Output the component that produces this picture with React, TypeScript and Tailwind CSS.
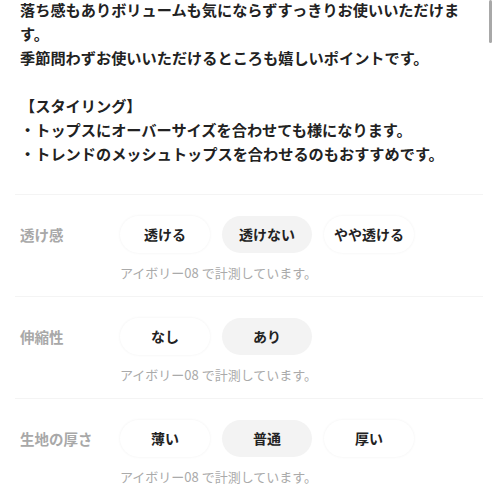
const font = { fontFamily: '"Noto Sans CJK JP", "Noto Sans", sans-serif' };

type Spec = {
  label: string;
  options: string[];
  selected: number;
};

const specs: Spec[] = [
  { label: "透け感", options: ["透ける", "透けない", "やや透ける"], selected: 1 },
  { label: "伸縮性", options: ["なし", "あり"], selected: 1 },
  { label: "生地の厚さ", options: ["薄い", "普通", "厚い"], selected: 1 },
];

function SpecRow({ spec }: { spec: Spec }) {
  return (
    <div className="mx-[15px] border-t border-[#f4f4f4] pt-[21px] pb-[15px]">
      <div className="flex items-center">
        <div className="w-[105px] pl-[5px] text-[14.5px] font-bold text-[#a8a8a8]">{spec.label}</div>
        <div className="flex gap-[12px]">
          {spec.options.map((o, i) => (
            <div
              key={o}
              className={`flex h-[37px] w-[90px] items-center justify-center rounded-full text-[14px] font-bold text-[#222] ${
                i === spec.selected
                  ? "bg-[#f3f3f3]"
                  : "bg-white shadow-[0_0_3px_rgba(0,0,0,0.06)]"
              }`}
            >
              {o}
            </div>
          ))}
        </div>
      </div>
      <p className="mt-[12px] pl-[105px] text-[13px] leading-4 text-[#aaaaaa]">アイボリー08 で計測しています。</p>
    </div>
  );
}

export default function App() {
  return (
    <div className="relative h-[498px] w-[498px] overflow-hidden bg-white" style={font}>
      <div className="absolute right-[6px] top-0 h-[43px] w-[3px] rounded-full bg-[#a8a8a8]" />
      <div className="-mt-[3px] px-[20px] text-[15.2px] leading-6 font-semibold text-[#222]">
        <p>落ち感もありボリュームも気にならずすっきりお使いいただけます。</p>
        <p>季節問わずお使いいただけるところも嬉しいポイントです。</p>
        <p>&nbsp;</p>
        <p>【スタイリング】</p>
        <p>・トップスにオーバーサイズを合わせても様になります。</p>
        <p>・トレンドのメッシュトップスを合わせるのもおすすめです。</p>
      </div>
      <div className="mt-[29px]">
        {specs.map((s) => (
          <SpecRow key={s.label} spec={s} />
        ))}
      </div>
    </div>
  );
}
